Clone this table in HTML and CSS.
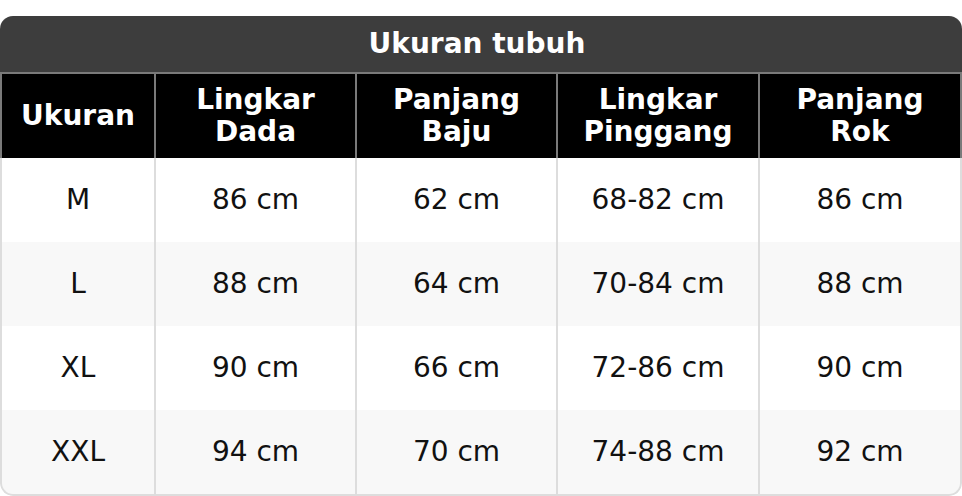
FILE: index.html
```html
<!DOCTYPE html>
<html lang="id">
<head>
<meta charset="utf-8">
<title>Ukuran tubuh</title>
<link rel="stylesheet" href="styles.css">
</head>
<body>
<div class="wrap">
<table class="size-table">
  <colgroup>
    <col class="c1"><col class="c2"><col class="c3"><col class="c4"><col class="c5">
  </colgroup>
  <thead>
    <tr><th class="title" colspan="5">Ukuran tubuh</th></tr>
    <tr class="head">
      <th>Ukuran</th>
      <th>Lingkar<br>Dada</th>
      <th>Panjang<br>Baju</th>
      <th>Lingkar<br>Pinggang</th>
      <th>Panjang<br>Rok</th>
    </tr>
  </thead>
  <tbody>
    <tr><td>M</td><td>86 cm</td><td>62 cm</td><td>68-82 cm</td><td>86 cm</td></tr>
    <tr><td>L</td><td>88 cm</td><td>64 cm</td><td>70-84 cm</td><td>88 cm</td></tr>
    <tr><td>XL</td><td>90 cm</td><td>66 cm</td><td>72-86 cm</td><td>90 cm</td></tr>
    <tr><td>XXL</td><td>94 cm</td><td>70 cm</td><td>74-88 cm</td><td>92 cm</td></tr>
  </tbody>
</table>
</div>
</body>
</html>
```
FILE: styles.css
```css
html, body {
  margin: 0;
  padding: 0;
  background: #ffffff;
}
body {
  padding-top: 16px;
  font-family: "DejaVu Sans", "Liberation Sans", sans-serif;
}
.wrap {
  width: 962px;
  border-radius: 13px;
  overflow: hidden;
}
.size-table {
  width: 962px;
  table-layout: fixed;
  border-collapse: separate;
  border-spacing: 0;
  font-size: 28px;
}
.c1 { width: 154px; }
.c2 { width: 201px; }
.c3 { width: 201px; }
.c4 { width: 202px; }
.c5 { width: auto; }

.title {
  height: 56px;
  padding: 0 8px 0 0;
  background: #3d3d3d;
  color: #ffffff;
  font-weight: bold;
  line-height: 56px;
  text-align: center;
  border-bottom: 2px solid #7a7a7a;
}
.head th {
  height: 84px;
  padding: 0;
  background: #000000;
  color: #ffffff;
  font-weight: bold;
  line-height: 32px;
  text-align: center;
  vertical-align: middle;
  border-left: 2px solid #7a7a7a;
}
.head th:last-child {
  border-right: 2px solid #7a7a7a;
}
tbody td {
  height: 84px;
  padding: 0;
  color: #111111;
  text-align: center;
  vertical-align: middle;
  line-height: 32px;
  border-left: 2px solid #dddddd;
  background: #ffffff;
}
tbody td:last-child {
  border-right: 2px solid #dddddd;
}
tbody tr:nth-child(even) td {
  background: #f8f8f8;
}
tbody tr:last-child td {
  border-bottom: 2px solid #dddddd;
}
tbody tr:last-child td:first-child {
  border-bottom-left-radius: 13px;
}
tbody tr:last-child td:last-child {
  border-bottom-right-radius: 13px;
}
```
